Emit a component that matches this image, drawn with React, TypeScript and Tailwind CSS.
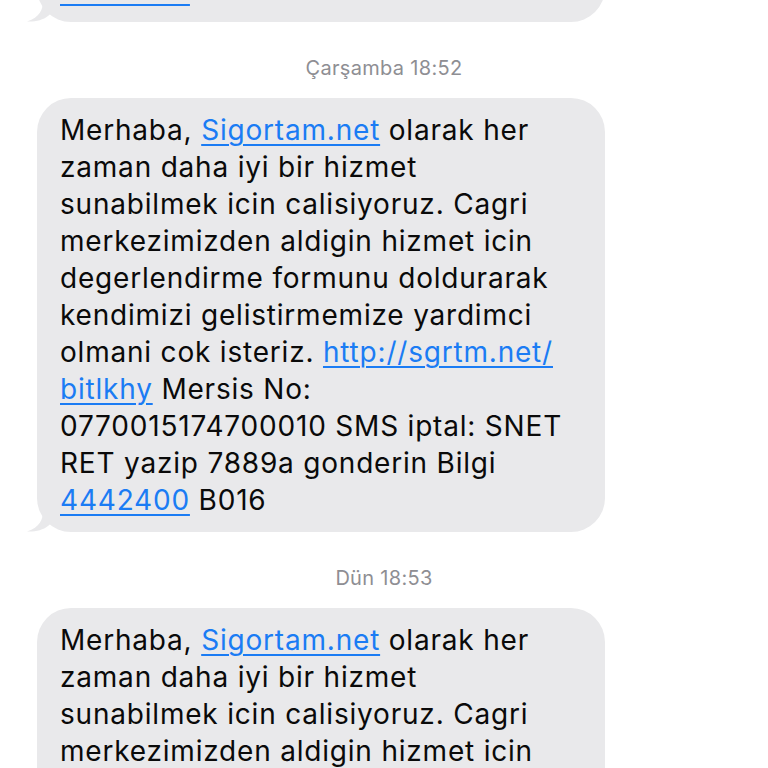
import React from "react";

const Link = ({ children }: { children: React.ReactNode }) => (
  <span className="text-[#1b7cf4] underline decoration-[1.5px] underline-offset-[4px]">{children}</span>
);

const Message = () => (
  <div className="relative ml-[37px] w-[568px] rounded-[34px] bg-[#e9e9eb] pl-[23px] pr-[10px] pt-[14px] pb-[13px]">
    <div className="whitespace-nowrap text-[28px] leading-[37px] tracking-[0.8px] text-[#0a0a0a]" style={{ fontFamily: '"Inter", "Roboto", sans-serif' }}>
      Merhaba, <Link>Sigortam.net</Link> olarak her<br />
      zaman daha iyi bir hizmet<br />
      sunabilmek icin calisiyoruz. Cagri<br />
      merkezimizden aldigin hizmet icin<br />
      degerlendirme formunu doldurarak<br />
      kendimizi gelistirmemize yardimci<br />
      olmani cok isteriz. <Link>http://sgrtm.net/</Link><br />
      <Link>bitlkhy</Link> Mersis No:<br />
      0770015174700010 SMS iptal: SNET<br />
      RET yazip 7889a gonderin Bilgi<br />
      <Link>4442400</Link> B016
    </div>
    <svg className="absolute bottom-0 left-[-10px]" width="26" height="22" viewBox="0 0 26 22">
      <path d="M16 0 C16 10 13 17 0 21.5 C8 22 16 20 21 16 L26 12 L26 0 Z" fill="#e9e9eb" />
    </svg>
  </div>
);

const Stamp = ({ day, time }: { day: string; time: string }) => (
  <div className="flex h-[76px] items-center justify-center pt-[15px] text-[20px] tracking-[0.3px] text-[#8e8e93]" style={{ fontFamily: '"Inter", "Roboto", sans-serif' }}>
    <span>{day}</span>&nbsp;<span>{time}</span>
  </div>
);

export default function App() {
  return (
    <div className="h-[768px] w-[768px] overflow-hidden bg-white">
      <div className="-mt-[412px]">
        <Message />
        <Stamp day="Çarşamba" time="18:52" />
        <Message />
        <Stamp day="Dün" time="18:53" />
        <Message />
      </div>
    </div>
  );
}
